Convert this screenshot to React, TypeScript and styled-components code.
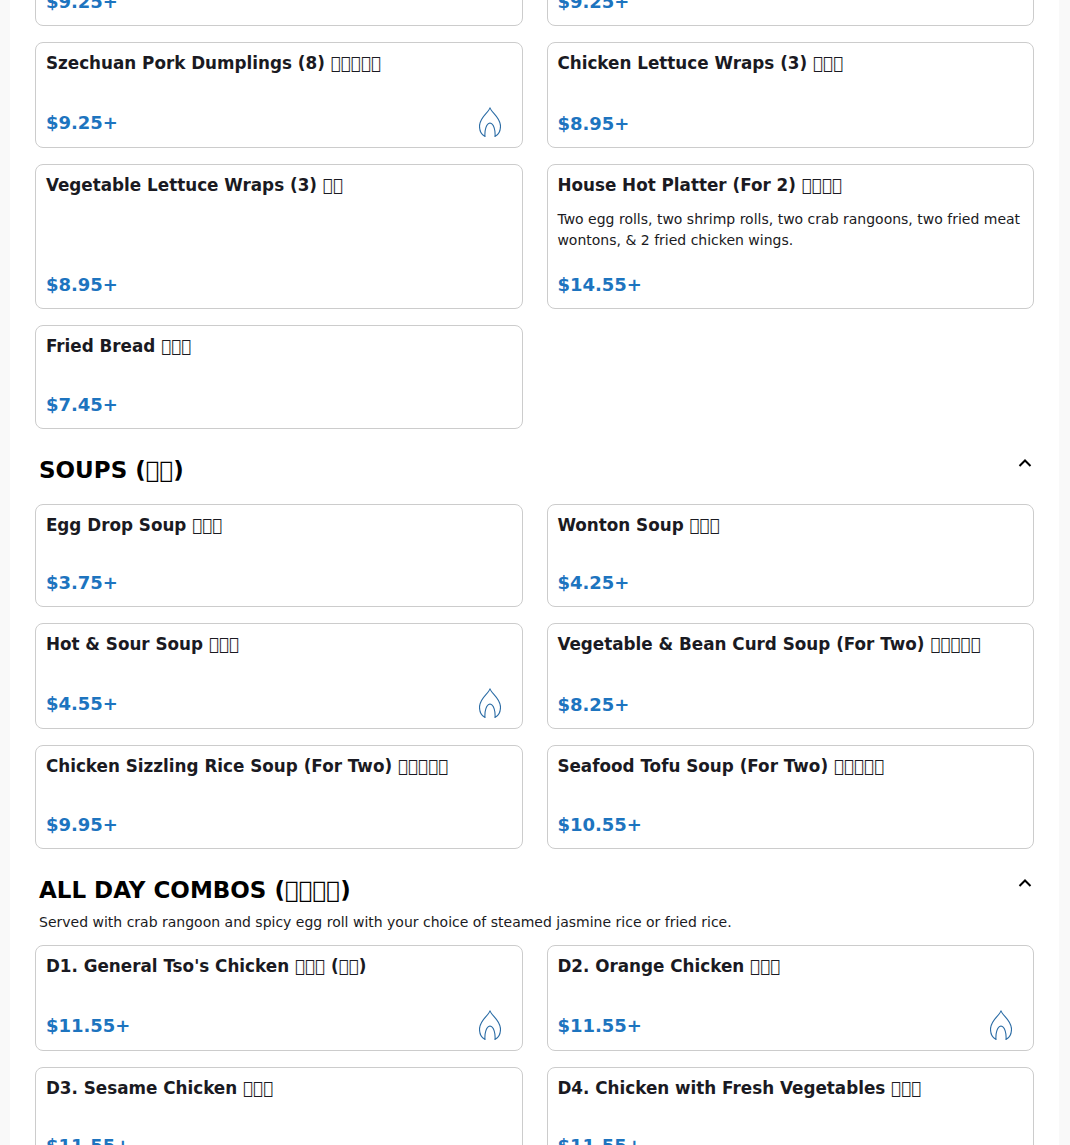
import React from 'react';
import styled, { createGlobalStyle } from 'styled-components';

const GlobalStyle = createGlobalStyle`
  html, body {
    margin: 0;
    padding: 0;
    background: #f9f9f9;
  }
  body {
    font-family: "DejaVu Sans", sans-serif;
  }
`;

const Viewport = styled.div`
  height: 100vh;
  overflow: hidden;
`;

// the shot is taken part way down the menu, so the first row starts above the fold
const Page = styled.main`
  width: 1049px;
  margin: -90.8px 0 0 10px;
  padding: 0 25px;
  box-sizing: border-box;
  background: #fff;
`;

const SectionHeader = styled.div`
  display: flex;
  justify-content: space-between;
  padding: 24px 1px 3.2px 4px;
`;

const SectionTitle = styled.h2`
  margin: 0;
  font-size: 23px;
  line-height: 34.5px;
  font-weight: 700;
  color: #000;
`;

const Chevron = styled.svg`
  width: 16px;
  height: 16px;
  margin-top: 2px;
  fill: none;
  stroke: #000;
  stroke-width: 2;
`;

const SectionNote = styled.p`
  margin: 0;
  padding: 3px 0 0 4px;
  font-size: 14px;
  line-height: 18.7px;
  color: #1a1a22;
`;

const Grid = styled.div`
  display: grid;
  grid-template-columns: 1fr 1fr;
  gap: 16px 24px;
  margin-top: 13px;
`;

const Card = styled.article`
  display: flex;
  flex-direction: column;
  box-sizing: border-box;
  padding: 10px 10px 10px 9.9px;
  border: 1px solid #ccc;
  border-radius: 8px;
  background: #fff;
`;

const ItemName = styled.h3`
  margin: 0 0 14.5px;
  font-size: 16.8px;
  line-height: 20.16px;
  font-weight: 700;
  color: #1a1a22;
`;

const ItemDescription = styled.p`
  margin: 0;
  font-size: 14px;
  line-height: 21px;
  color: #1a1a22;
`;

const ItemFooter = styled.div`
  display: flex;
  align-items: center;
  justify-content: space-between;
  margin-top: auto;
  padding-top: 19.04px;
`;

const Price = styled.span`
  padding-top: 2px;
  font-size: 18px;
  line-height: 26px;
  font-weight: 700;
  color: #1d74bf;
`;

const FlameIcon = styled.svg`
  width: 22px;
  height: 30px;
  margin-right: 11px;
  fill: none;
  stroke: #2b6ca5;
  stroke-width: 1.1;
`;

const Flame = () => (
  <FlameIcon viewBox="0 0 22 30">
    <path d="M11 .5C11.500 5 21.500 10 21.500 19c0 5.500-2.500 9-5.500 10.500.5-5.500-1-13-5-13.500-4 .5-5.500 8-5 13.500C3 28 .5 24.500.5 19 .5 10 10.500 5 11 .5Z" />
  </FlameIcon>
);

const ChevronUp = () => (
  <Chevron viewBox="0 0 16 16">
    <path d="M2.500 11 8 5.500 13.500 11" />
  </Chevron>
);

// the reference page had no CJK font, so its Chinese names show as empty boxes;
// a private-use character gets the same missing-glyph box from DejaVu
const tofu = (n: number) => '\uE0F0'.repeat(n);

interface Item {
  name: string;
  price: string;
  description?: string;
  hot?: boolean;
}

interface MenuSection {
  title?: string;
  note?: string;
  items: Item[];
}

const sections: MenuSection[] = [
  {
    items: [
      { name: 'Pork Dumplings (8)', price: '$9.25+' },
      { name: 'Chicken Dumplings (8)', price: '$9.25+' },
      { name: `Szechuan Pork Dumplings (8) ${tofu(5)}`, price: '$9.25+', hot: true },
      { name: `Chicken Lettuce Wraps (3) ${tofu(3)}`, price: '$8.95+' },
      { name: `Vegetable Lettuce Wraps (3) ${tofu(2)}`, price: '$8.95+' },
      {
        name: `House Hot Platter (For 2) ${tofu(4)}`,
        price: '$14.55+',
        description:
          'Two egg rolls, two shrimp rolls, two crab rangoons, two fried meat wontons, & 2 fried chicken wings.',
      },
      { name: `Fried Bread ${tofu(3)}`, price: '$7.45+' },
    ],
  },
  {
    title: `SOUPS (${tofu(2)})`,
    items: [
      { name: `Egg Drop Soup ${tofu(3)}`, price: '$3.75+' },
      { name: `Wonton Soup ${tofu(3)}`, price: '$4.25+' },
      { name: `Hot & Sour Soup ${tofu(3)}`, price: '$4.55+', hot: true },
      { name: `Vegetable & Bean Curd Soup (For Two) ${tofu(5)}`, price: '$8.25+' },
      { name: `Chicken Sizzling Rice Soup (For Two) ${tofu(5)}`, price: '$9.95+' },
      { name: `Seafood Tofu Soup (For Two) ${tofu(5)}`, price: '$10.55+' },
    ],
  },
  {
    title: `ALL DAY COMBOS (${tofu(4)})`,
    note: 'Served with crab rangoon and spicy egg roll with your choice of steamed jasmine rice or fried rice.',
    items: [
      { name: `D1. General Tso's Chicken ${tofu(3)} (${tofu(2)})`, price: '$11.55+', hot: true },
      { name: `D2. Orange Chicken ${tofu(3)}`, price: '$11.55+', hot: true },
      { name: `D3. Sesame Chicken ${tofu(3)}`, price: '$11.55+' },
      { name: `D4. Chicken with Fresh Vegetables ${tofu(3)}`, price: '$11.55+' },
    ],
  },
];

export default function App() {
  return (
    <Viewport>
      <GlobalStyle />
      <Page>
        {sections.map((section, i) => (
          <section key={i}>
            {section.title && (
              <SectionHeader>
                <SectionTitle>{section.title}</SectionTitle>
                <ChevronUp />
              </SectionHeader>
            )}
            {section.note && <SectionNote>{section.note}</SectionNote>}
            <Grid>
              {section.items.map((item) => (
                <Card key={item.name}>
                  <ItemName>{item.name}</ItemName>
                  {item.description && <ItemDescription>{item.description}</ItemDescription>}
                  <ItemFooter>
                    <Price>{item.price}</Price>
                    {item.hot && <Flame />}
                  </ItemFooter>
                </Card>
              ))}
            </Grid>
          </section>
        ))}
      </Page>
    </Viewport>
  );
}
